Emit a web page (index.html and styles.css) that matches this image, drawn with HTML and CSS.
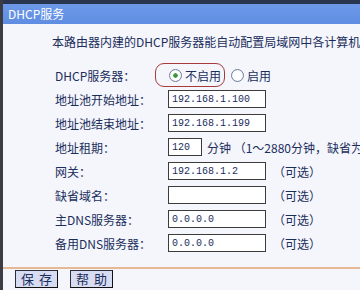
FILE: index.html
```html
<!DOCTYPE html>
<html lang="zh-CN">
<head>
    <meta charset="UTF-8">
    <title>DHCP服务</title>
    <link rel="stylesheet" href="styles.css">
</head>
<body>
    <div class="frame">
        <div class="side"></div>
        <div class="main">
            <div class="topband"></div>
            <div class="titlebar">DHCP服务</div>
            <p class="intro">本路由器内建的DHCP服务器能自动配置局域网中各计算机的TCP/IP协议。</p>

            <div class="form">
                <label class="lbl">DHCP服务器：</label>
                <div class="field">
                    <span class="mark">
                        <input type="radio" name="dhcp" class="radio" checked>
                        <span class="opt">不启用</span>
                    </span>
                    <input type="radio" name="dhcp" class="radio">
                    <span class="opt">启用</span>
                </div>

                <label class="lbl">地址池开始地址：</label>
                <div class="field"><input class="box" type="text" value="192.168.1.100"></div>

                <label class="lbl">地址池结束地址：</label>
                <div class="field"><input class="box" type="text" value="192.168.1.199"></div>

                <label class="lbl">地址租期：</label>
                <div class="field">
                    <input class="box short" type="text" value="120">
                    <span class="note">分钟 （1～2880分钟，缺省为120分钟）</span>
                </div>

                <label class="lbl">网关：</label>
                <div class="field"><input class="box" type="text" value="192.168.1.2"><span class="hint">（可选）</span></div>

                <label class="lbl">缺省域名：</label>
                <div class="field"><input class="box" type="text" value=""><span class="hint">（可选）</span></div>

                <label class="lbl">主DNS服务器：</label>
                <div class="field"><input class="box" type="text" value="0.0.0.0"><span class="hint">（可选）</span></div>

                <label class="lbl">备用DNS服务器：</label>
                <div class="field"><input class="box" type="text" value="0.0.0.0"><span class="hint">（可选）</span></div>
            </div>

            <div class="actions">
                <button class="btn">保存</button>
                <button class="btn">帮助</button>
            </div>
        </div>
    </div>
</body>
</html>
```

FILE: styles.css
```css
body {
    margin: 0;
    background: #f4f6fb;
    font-family: "Noto Sans CJK SC", "DejaVu Sans", sans-serif;
    font-size: 12px;
    color: #1b2d5c;
    overflow: hidden;
}
.frame {
    display: flex;
    height: 290px;
}
.side {
    width: 3px;
    background: #3b3d44;
}
.main {
    flex: 1;
    min-width: 0;
    overflow: hidden;
}
.topband {
    height: 4px;
    background: #2a3650;
}
.titlebar {
    height: 20px;
    line-height: 20px;
    padding-left: 5px;
    background: linear-gradient(#6d99e8, #5f8de2);
    color: #ffffff;
    font-size: 12px;
}
.intro {
    margin: 0;
    padding: 9px 0 13px 49px;
    line-height: 17px;
    white-space: nowrap;
}
.form {
    display: grid;
    grid-template-columns: 113px auto;
    grid-auto-rows: 24px;
    padding-left: 52px;
}
.lbl {
    display: flex;
    align-items: center;
    white-space: nowrap;
}
.field {
    display: flex;
    align-items: center;
    white-space: nowrap;
}
.mark {
    display: flex;
    align-items: center;
    height: 22px;
    margin-left: -13px;
    padding: 0 3px 0 13px;
    border: 1px solid #a83a3a;
    border-radius: 9px;
    margin-right: 6px;
}
.radio {
    appearance: none;
    -webkit-appearance: none;
    width: 13px;
    height: 13px;
    margin: 0 3px 0 0;
    border: 1px solid #6e7f9a;
    border-radius: 50%;
    background: radial-gradient(circle, #ffffff 50%, #dfe4ec 100%);
    box-sizing: border-box;
}
.radio:checked {
    background: radial-gradient(circle, #3c9a3c 0 2px, #ffffff 2.5px 55%, #dfe4ec 100%);
}
.opt {
    font-size: 12px;
}
.box {
    width: 98px;
    height: 18px;
    box-sizing: border-box;
    border: 1px solid #3c3c3c;
    background: #ffffff;
    padding: 0 3px;
    font-family: "Liberation Mono", monospace;
    font-size: 10px;
    color: #1b2d5c;
}
.short {
    width: 34px;
}
.note {
    margin-left: 5px;
}
.hint {
    margin-left: 7px;
}
.actions {
    margin-top: 12px;
    border-top: 2px solid #e6b994;
    padding: 1px 0 0 12px;
    display: flex;
    gap: 12px;
}
.btn {
    width: 43px;
    height: 18px;
    padding: 0 0 0 5px;
    background: #d8dcf2;
    border: 1px solid #2e2e3a;
    border-right-color: #111;
    border-bottom-color: #111;
    font-family: "Noto Sans CJK SC", sans-serif;
    font-size: 13px;
    letter-spacing: 5px;
    line-height: 16px;
    color: #1b2d5c;
}
```
